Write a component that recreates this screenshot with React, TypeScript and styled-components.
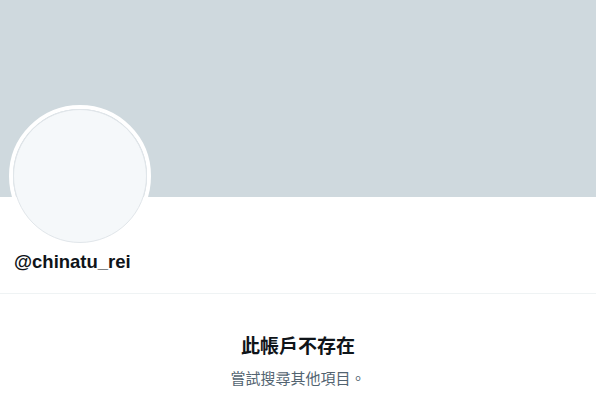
import styled, { createGlobalStyle } from "styled-components";

const GlobalStyle = createGlobalStyle`
  html, body {
    margin: 0;
    padding: 0;
    background: #ffffff;
  }
  body {
    font-family: "Liberation Sans", "Noto Sans CJK TC", Arial, sans-serif;
    color: #0f1419;
  }
`;

const Page = styled.main`
  width: 596px;
  height: 412px;
  overflow: hidden;
  display: flex;
  flex-direction: column;
`;

const Banner = styled.div`
  height: 197px;
  background-color: #cfd9de;
`;

const ProfileHead = styled.section`
  display: flex;
  flex-direction: column;
  align-items: flex-start;
  padding: 0 0 0 14px;
  border-bottom: 1px solid #eff3f4;
`;

const Avatar = styled.div`
  width: 134px;
  height: 134px;
  margin: -92px 0 0 -5px;
  border: 4px solid #ffffff;
  border-radius: 50%;
  position: relative;
  &::after {
    content: "";
    position: absolute;
    inset: 0;
    border-radius: 50%;
    background-color: #f5f8fa;
    border: 1px solid #e1e6ea;
  }
`;

const Handle = styled.h2`
  margin: 3px 0 19px;
  font-size: 18.5px;
  line-height: 24px;
  font-weight: 700;
`;

const Empty = styled.section`
  display: flex;
  flex-direction: column;
  align-items: center;
  padding-top: 39px;
  gap: 12px;
`;

const Title = styled.h3`
  margin: 0;
  font-size: 19px;
  line-height: 24px;
  font-weight: 700;
  font-family: "Noto Sans CJK TC", sans-serif;
`;

const Hint = styled.p`
  margin: 0;
  font-size: 15px;
  line-height: 18px;
  color: #536471;
  font-family: "Noto Sans CJK TC", sans-serif;
`;

export default function App() {
  return (
    <Page>
      <GlobalStyle />
      <Banner />
      <ProfileHead>
        <Avatar />
        <Handle>@chinatu_rei</Handle>
      </ProfileHead>
      <Empty>
        <Title>此帳戶不存在</Title>
        <Hint>嘗試搜尋其他項目。</Hint>
      </Empty>
    </Page>
  );
}
